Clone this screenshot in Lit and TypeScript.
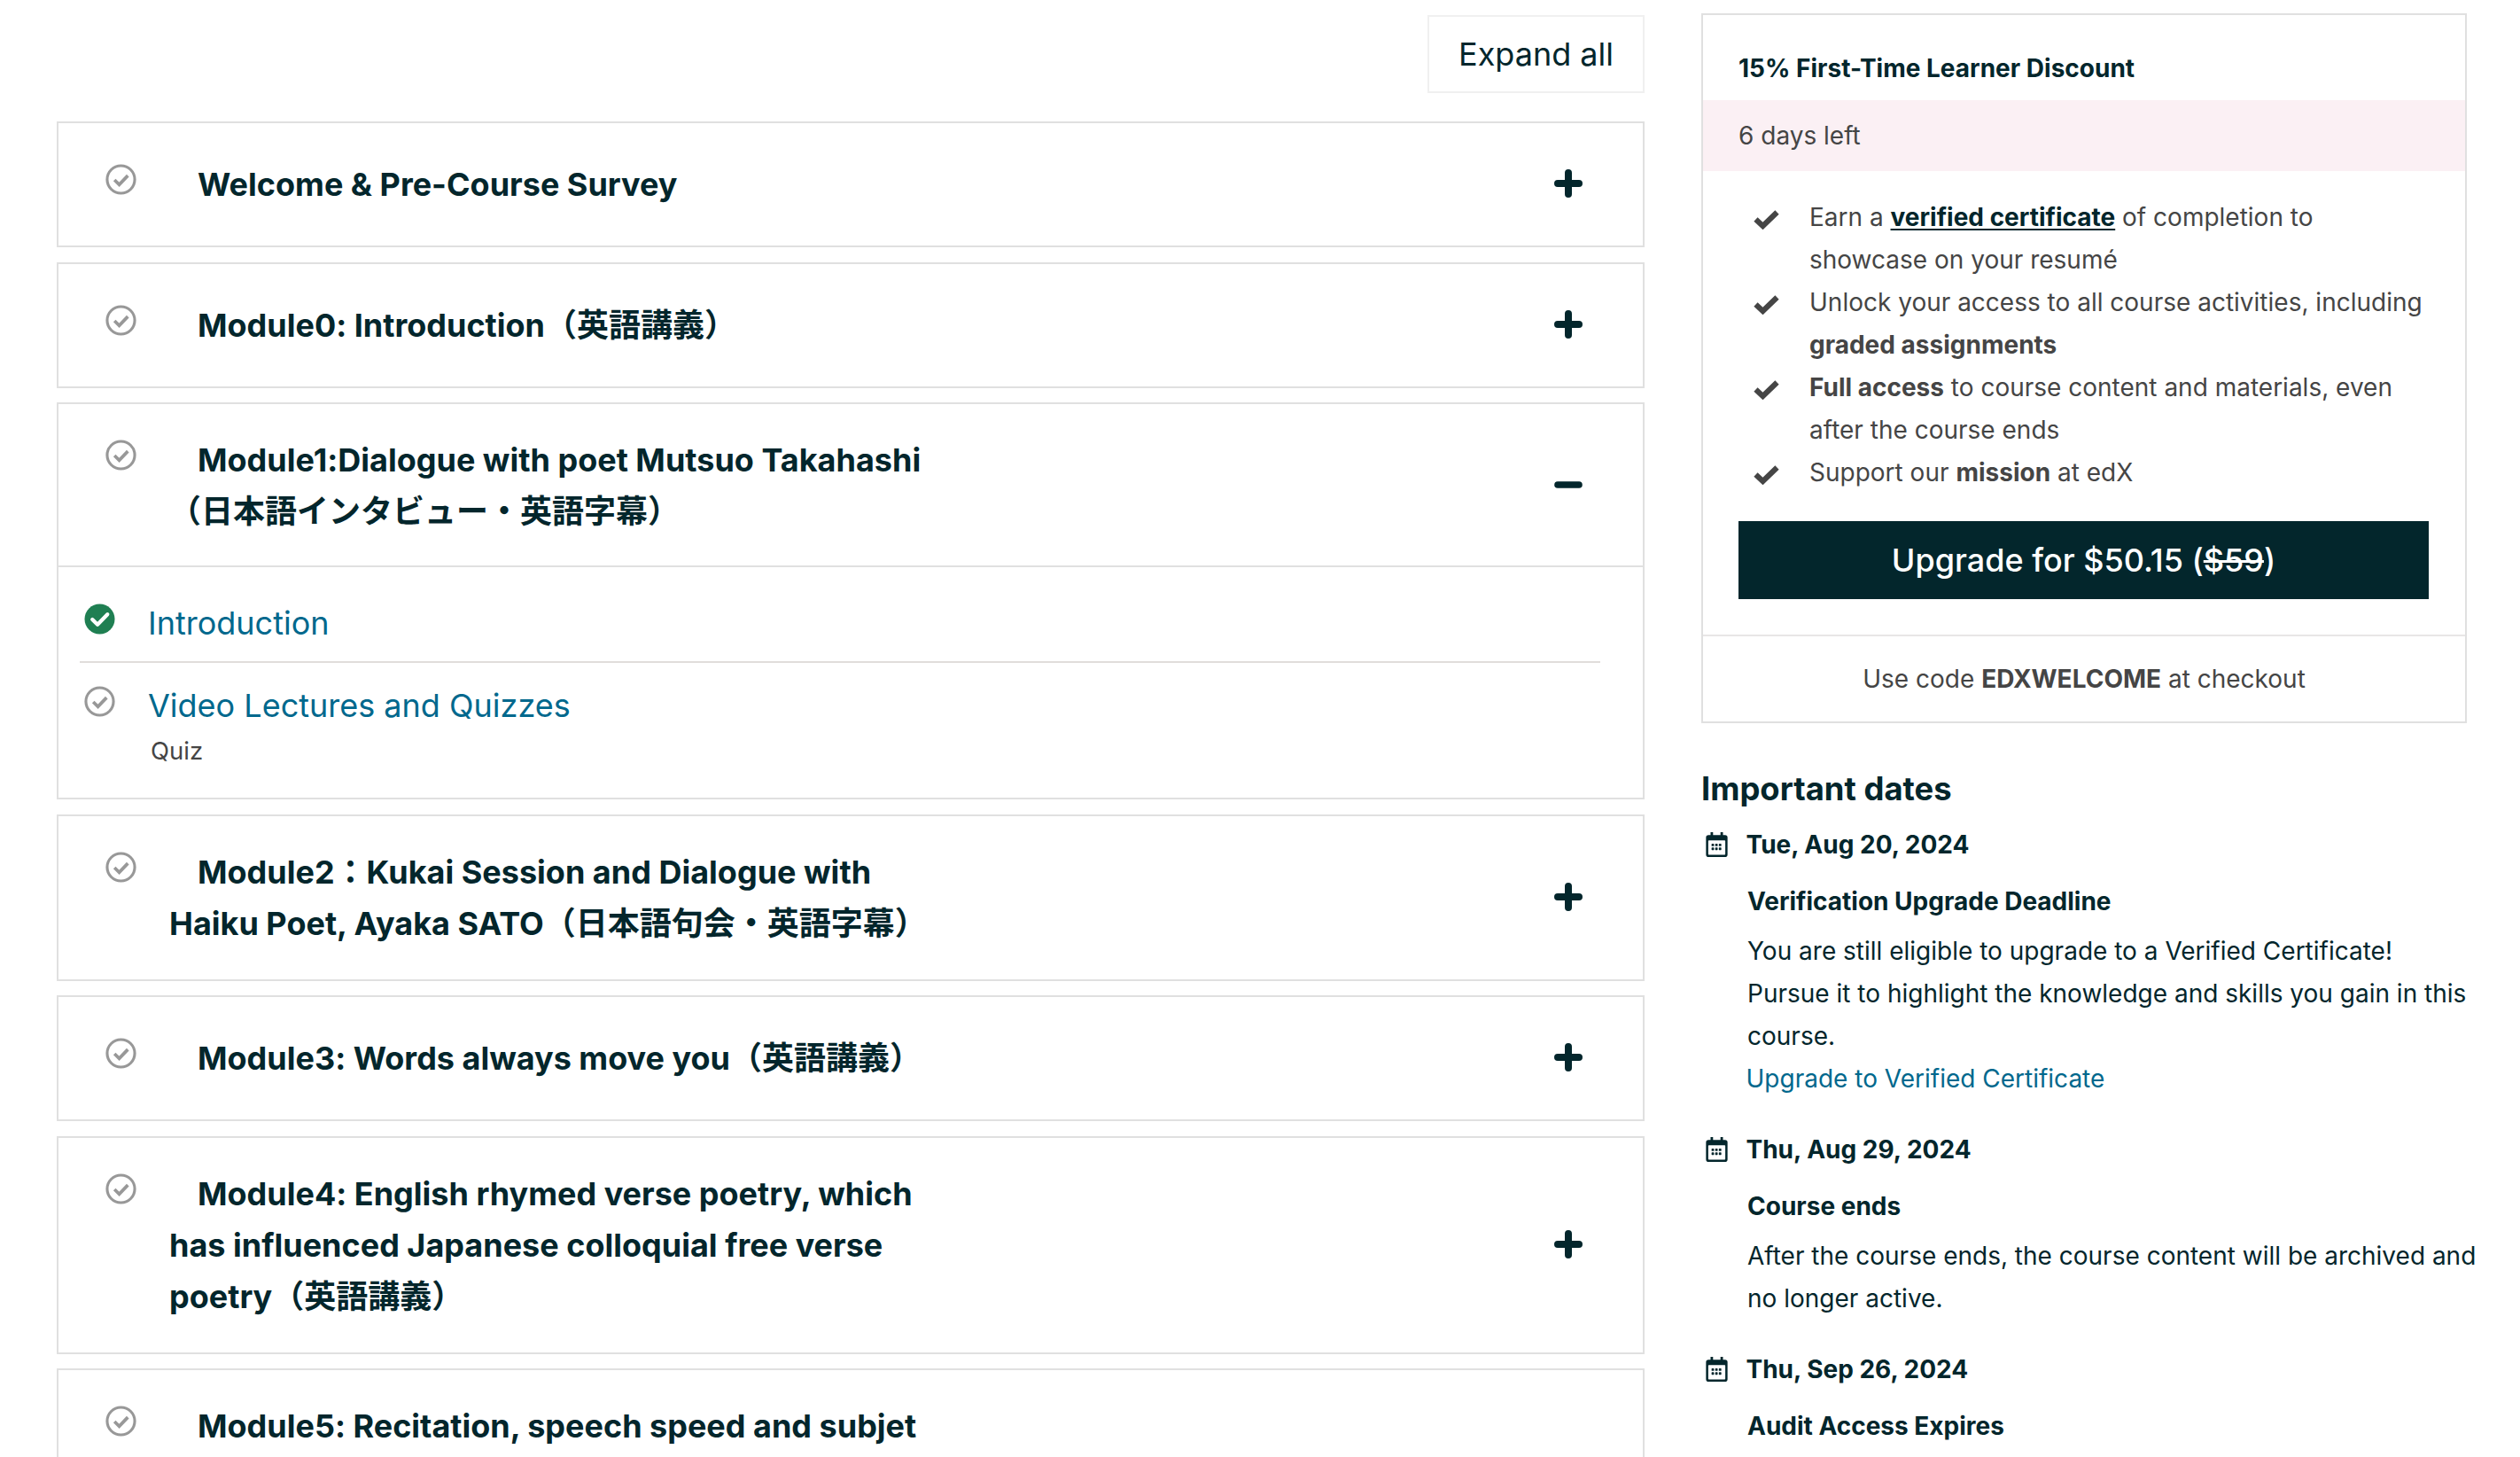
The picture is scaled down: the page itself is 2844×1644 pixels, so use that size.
import { LitElement, html, css, svg } from "lit";
import { customElement } from "lit/decorators.js";

const ringCheck = html`<svg class="ring" viewBox="0 0 36 36" fill="none"><circle cx="18" cy="18" r="16" stroke="#989898" stroke-width="3.2"/><path d="M10.500 18.500l5.500 5.500 10-10.500" stroke="#989898" stroke-width="3.800"/></svg>`;
const greenCheck = html`<svg class="ring" viewBox="0 0 36 36" fill="none"><circle cx="18" cy="18" r="17.5" fill="#1f7f52"/><path d="M9.500 18.500l6 6 11.500-12" stroke="#fff" stroke-width="4.4" stroke-linecap="round" stroke-linejoin="round"/></svg>`;
const plus = html`<svg class="pm" viewBox="0 0 32 32"><path d="M16 4v24M4 16h24" stroke="#03262c" stroke-width="8" stroke-linecap="round"/></svg>`;
const minus = html`<svg class="pm" viewBox="0 0 32 32"><path d="M4 16h24" stroke="#03262c" stroke-width="7.6" stroke-linecap="round"/></svg>`;
const tick = html`<svg class="tick" viewBox="0 0 29 23" fill="none"><path d="M2.500 11.500l8 7.500L26.500 3.500" stroke="#454545" stroke-width="6.200"/></svg>`;
const dots = [0, 1].flatMap((r) => [0, 1, 2].map((c) => svg`<rect x="${6.7 + c * 4.4}" y="${14 + r * 4.6}" width="3" height="3" rx="0.6" fill="#03262c"/>`));
const cal = html`<svg class="cal" viewBox="0 0 26 30" fill="none"><path d="M5.500 0h3v3.500h9V0h3v3.500H23a3 3 0 0 1 3 3V27a3 3 0 0 1-3 3H3a3 3 0 0 1-3-3V6.500a3 3 0 0 1 3-3h2.500z" fill="#03262c"/><rect x="2.700" y="10" width="20.600" height="17.300" rx="0.800" fill="#fff"/>${dots}</svg>`;

type Mod = { title: string; open?: boolean; tall?: boolean };
const mods: Mod[] = [
  { title: "Welcome & Pre-Course Survey" },
  { title: "Module0: Introduction（英語講義）" },
  { title: "Module1:Dialogue with poet Mutsuo Takahashi （日本語インタビュー・英語字幕）", open: true },
  { title: "Module2：Kukai Session and Dialogue with Haiku Poet, Ayaka SATO（日本語句会・英語字幕）" },
  { title: "Module3: Words always move you（英語講義）" },
  { title: "Module4: English rhymed verse poetry, which has influenced Japanese colloquial free verse poetry（英語講義）" },
  { title: "Module5: Recitation, speech speed and subjet", tall: true },
];

@customElement("app-root")
export class AppRoot extends LitElement {
  static styles = css`
    :host { display: block; width: 2844px; height: 1644px; overflow: hidden; background: #fff;
      font-family: Inter, "Noto Sans CJK KR", sans-serif; color: #03262c; font-feature-settings: "calt" 0; }
    * { box-sizing: border-box; }
    .page { display: flex; gap: 64px; padding: 15px 0 0 64px; align-items: flex-start; }
    .left { width: 1792px; flex: none; padding-top: 2px; }
    .top { display: flex; justify-content: flex-end; margin-bottom: 32px; }
    .expand { width: 245px; height: 88px; border: 2px solid #f0f0f0; display: flex; align-items: center; justify-content: center;
      font-size: 36px; color: #03262c; }
    .card { border: 2px solid #e0e0e0; margin-bottom: 16.5px; }
    .head { display: flex; align-items: center; justify-content: space-between; min-height: 138px; padding: 34px 68px 34px 53px; }
    .open { border-bottom: 2px solid #e0e0e0; padding-bottom: 32px; }
    .tall { min-height: 242px; }
    .tall .hl { align-self: flex-start; }
    .hl { display: flex; align-items: flex-start; }
    .ring { width: 35px; height: 35px; flex: none; display: block; }
    .hl .ring { margin-top: 6px; }
    .title { width: 850px; margin: 0 0 0 37px; font-size: 36px; line-height: 58px; font-weight: 700; text-indent: 32px; }
    .pm { width: 32px; height: 32px; flex: none; margin-top: -2px; }
    .body { padding: 41px 48px 33px 24px; }
    .item { display: flex; gap: 37px; padding-left: 5px; }
    .item a { font-size: 36px; line-height: 44px; color: #00688d; display: block; }
    .first { padding-bottom: 21px; border-bottom: 2px solid #e0dddb; }
    .second { padding-top: 26px; }
    .quiz { font-size: 27.5px; line-height: 40px; color: #454545; margin: 9px 0 0 3px; }
    .right { width: 864px; flex: none; font-size: 28px; line-height: 48px; }
    .promo { border: 2px solid #e0e0e0; color: #454545; }
    .ptitle { padding: 39px 40px 15px; line-height: 42px; font-weight: 700; color: #03262c; font-size: 28px; }
    .days { background: #fbf0f4; height: 80px; padding: 0 40px; display: flex; align-items: center; }
    ul { list-style: none; margin: 0; padding: 28px 40px 0 57px; }
    li { display: flex; gap: 34px; }
    .tick { width: 29px; height: 23px; flex: none; margin-top: 15px; }
    li b, .code b { font-weight: 700; }
    li a { color: #03262c; font-weight: 700; text-decoration: underline; text-underline-offset: 3px; }
    .btn { margin: 31px 41px 0 40px; height: 88px; background: #03262c; color: #fff; font-size: 36px; font-weight: 500; display: flex; align-items: center; justify-content: center; }
    .code { margin-top: 40px; border-top: 2px solid #e8e6e6; height: 98px; display: flex; align-items: center; justify-content: center; }
    h2 { font-size: 36.4px; line-height: 44px; font-weight: 700; margin: 52px 0 17px; }
    .dates { width: 880px; }
    .drow { display: flex; align-items: center; gap: 20.5px; padding-left: 5px; font-weight: 700; height: 48px; }
    .cal { width: 25px; height: 28px; flex: none; }
    .dtitle { font-weight: 700; margin: 16px 0 8px 52px; }
    .desc { margin: 0 0 0 52px; color: #03262c; line-height: 48px; }
    .link { display: block; margin-left: 50.5px; color: #00688d; }
    .ev { margin-bottom: 32px; }
  `;

  render() {
    return html`<div class="page">
      <div class="left">
        <div class="top"><div class="expand">Expand all</div></div>
        ${mods.map((m) => html`<section class="card">
          <div class="head ${m.open ? "open" : ""} ${m.tall ? "tall" : ""}">
            <div class="hl">${ringCheck}<h3 class="title">${m.title}</h3></div>
            ${m.open ? minus : plus}
          </div>
          ${m.open ? html`<div class="body">
            <div class="item first">${greenCheck}<a>Introduction</a></div>
            <div class="item second">${ringCheck}<div><a>Video Lectures and Quizzes</a><div class="quiz">Quiz</div></div></div>
          </div>` : ""}
        </section>`)}
      </div>
      <aside class="right">
        <div class="promo">
          <div class="ptitle">15% First-Time Learner Discount</div>
          <div class="days">6 days left</div>
          <ul>
            <li>${tick}<span>Earn a <a>verified certificate</a> of completion to showcase on your resumé</span></li>
            <li>${tick}<span>Unlock your access to all course activities, including <b>graded assignments</b></span></li>
            <li>${tick}<span><b>Full access</b> to course content and materials, even after the course ends</span></li>
            <li>${tick}<span>Support our <b>mission</b> at edX</span></li>
          </ul>
          <div class="btn"><span>Upgrade for $50.15 (<s>$59</s>)</span></div>
          <div class="code"><span>Use code <b>EDXWELCOME</b> at checkout</span></div>
        </div>
        <div class="dates">
          <h2>Important dates</h2>
          <div class="ev">
            <div class="drow">${cal}<span>Tue, Aug 20, 2024</span></div>
            <div class="dtitle">Verification Upgrade Deadline</div>
            <p class="desc">You are still eligible to upgrade to a Verified Certificate! Pursue it to highlight the knowledge and skills you gain in this course.</p>
            <a class="link">Upgrade to Verified Certificate</a>
          </div>
          <div class="ev">
            <div class="drow">${cal}<span>Thu, Aug 29, 2024</span></div>
            <div class="dtitle">Course ends</div>
            <p class="desc">After the course ends, the course content will be archived and no longer active.</p>
          </div>
          <div class="ev">
            <div class="drow">${cal}<span>Thu, Sep 26, 2024</span></div>
            <div class="dtitle">Audit Access Expires</div>
          </div>
        </div>
      </aside>
    </div>`;
  }
}
